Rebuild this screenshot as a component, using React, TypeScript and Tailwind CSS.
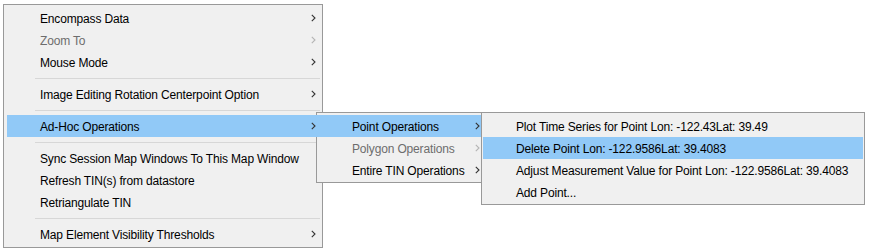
import type { ReactNode } from 'react';

type Item =
  | { kind: 'item'; label: string; sub?: boolean; disabled?: boolean; active?: boolean }
  | { kind: 'sep' };

const MAIN: Item[] = [
  { kind: 'item', label: 'Encompass Data', sub: true },
  { kind: 'item', label: 'Zoom To', sub: true, disabled: true },
  { kind: 'item', label: 'Mouse Mode', sub: true },
  { kind: 'sep' },
  { kind: 'item', label: 'Image Editing Rotation Centerpoint Option', sub: true },
  { kind: 'sep' },
  { kind: 'item', label: 'Ad-Hoc Operations', sub: true, active: true },
  { kind: 'sep' },
  { kind: 'item', label: 'Sync Session Map Windows To This Map Window' },
  { kind: 'item', label: 'Refresh TIN(s) from datastore' },
  { kind: 'item', label: 'Retriangulate TIN' },
  { kind: 'sep' },
  { kind: 'item', label: 'Map Element Visibility Thresholds', sub: true },
];

const ADHOC: Item[] = [
  { kind: 'item', label: 'Point Operations', sub: true, active: true },
  { kind: 'item', label: 'Polygon Operations', sub: true, disabled: true },
  { kind: 'item', label: 'Entire TIN Operations', sub: true },
];

const POINT: Item[] = [
  { kind: 'item', label: 'Plot Time Series for Point Lon: -122.43Lat: 39.49' },
  { kind: 'item', label: 'Delete Point Lon: -122.9586Lat: 39.4083', active: true },
  { kind: 'item', label: 'Adjust Measurement Value for Point Lon: -122.9586Lat: 39.4083' },
  { kind: 'item', label: 'Add Point...' },
];

function Chevron({ disabled }: { disabled?: boolean }) {
  return (
    <svg width="5" height="8" viewBox="0 0 5 8" className="shrink-0">
      <path
        d="M0.8 0.8 L4 4 L0.8 7.2"
        fill="none"
        stroke={disabled ? '#b4b4b4' : '#333333'}
        strokeWidth="1.1"
      />
    </svg>
  );
}

function Menu({
  items,
  rowClass,
  sepClass,
  className,
}: {
  items: Item[];
  rowClass: string;
  sepClass?: string;
  className: string;
}) {
  return (
    <div className={`border border-[#999999] bg-[#f0f0f0] ${className}`}>
      {items.map((it, i): ReactNode => {
        if (it.kind === 'sep') {
          return (
            <div key={i} className="flex h-[10px] items-center">
              <div className={`h-px bg-[#d7d7d7] ${sepClass ?? ''}`} />
            </div>
          );
        }
        return (
          <div
            key={i}
            className={`flex h-[22px] items-center justify-between ${rowClass} ${
              it.active ? 'bg-[#91c9f7]' : ''
            } ${it.disabled ? 'text-[#6d6d6d]' : 'text-black'}`}
          >
            <span className="whitespace-nowrap pt-[2px]">{it.label}</span>
            {it.sub && <Chevron disabled={it.disabled} />}
          </div>
        );
      })}
    </div>
  );
}

export default function App() {
  return (
    <div
      className="relative h-[249px] w-[869px] overflow-hidden bg-white text-[12px] leading-none tracking-[-0.16px]"
      style={{ fontFamily: '"Segoe UI", "Liberation Sans", Arial, sans-serif' }}
    >
      <div className="pl-[3px] pt-[4px]">
        <Menu
          items={MAIN}
          className="h-[244px] w-[320px] pt-[2px]"
          rowClass="ml-[3px] -mr-px pl-[33px] pr-[7px]"
          sepClass="ml-[31px] w-[285px]"
        />
      </div>

      <Menu
        items={ADHOC}
        className="absolute left-[316px] top-[112px] h-[71px] w-[166px] pt-[2px]"
        rowClass="-ml-px -mr-[2px] pl-[36px] pr-[3px]"
      />

      <Menu
        items={POINT}
        className="absolute left-[481px] top-[112px] h-[93px] w-[384px] pt-[2px]"
        rowClass="mx-px pl-[33px]"
      />
    </div>
  );
}
